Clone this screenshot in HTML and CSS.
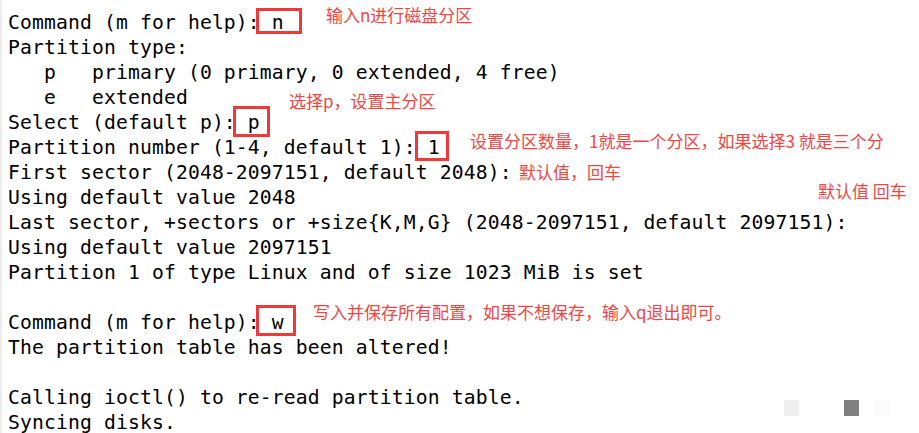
FILE: index.html
```html
<!DOCTYPE html>
<html lang="zh-CN">
<head>
<meta charset="utf-8">
<title>fdisk</title>
<link rel="stylesheet" href="styles.css">
</head>
<body>
<div class="shot">
<pre class="term">Command (m for help): n
Partition type:
   p   primary (0 primary, 0 extended, 4 free)
   e   extended
Select (default p): p
Partition number (1-4, default 1): 1
First sector (2048-2097151, default 2048):
Using default value 2048
Last sector, +sectors or +size{K,M,G} (2048-2097151, default 2097151):
Using default value 2097151
Partition 1 of type Linux and of size 1023 MiB is set

Command (m for help): w
The partition table has been altered!

Calling ioctl() to re-read partition table.
Syncing disks.</pre>

  <span class="box box-n"></span>
  <span class="box box-p"></span>
  <span class="box box-1"></span>
  <span class="box box-w"></span>

  <span class="note note-n">输入n进行磁盘分区</span>
  <span class="note note-p">选择p，设置主分区</span>
  <span class="note note-num">设置分区数量，1就是一个分区，如果选择3 就是三个分</span>
  <span class="note note-first">默认值，回车</span>
  <span class="note note-last">默认值 回车</span>
  <span class="note note-w">写入并保存所有配置，如果不想保存，输入q退出即可。</span>

  <div class="marks">
    <span class="mark mark-light"></span>
    <span class="mark mark-dark"></span>
    <span class="mark mark-faint"></span>
  </div>
</div>
</body>
</html>
```

FILE: styles.css
```css
html, body {
  margin: 0;
  padding: 0;
  background: #ffffff;
}

.shot {
  position: relative;
  width: 919px;
  height: 433px;
  overflow: hidden;
  box-sizing: border-box;
  border-left: 2px solid #ececec;
  padding: 10px 0 0 6px;
}

.term {
  margin: 0;
  font-family: "DejaVu Sans Mono", "Liberation Mono", monospace;
  font-size: 19.7px;
  letter-spacing: 0.14px;
  line-height: 25px;
  color: #000000;
}

.box {
  position: absolute;
  box-sizing: border-box;
  border: 3px solid #ef3a3a;
}

.box-n { left: 254px; top: 8px;   width: 46px; height: 26px; }
.box-p { left: 231px; top: 106px; width: 37px; height: 31px; }
.box-1 { left: 413px; top: 131px; width: 34px; height: 30px; }
.box-w { left: 254px; top: 305px; width: 40px; height: 31px; }

.note {
  position: absolute;
  font-family: "Noto Sans CJK SC", "Noto Sans", sans-serif;
  font-size: 17px;
  line-height: 20px;
  color: #f24545;
  white-space: nowrap;
}

.note-n     { left: 324px; top: 5px; }
.note-p     { left: 287px; top: 91px; }
.note-num   { left: 468px; top: 131px; }
.note-first { left: 517px; top: 162px; }
.note-last  { left: 816px; top: 181px; }
.note-w     { left: 311px; top: 302px; }

.marks {
  position: absolute;
  left: 782px;
  top: 400px;
  display: flex;
}

.mark {
  width: 15px;
  height: 16px;
}

.mark-light { background: #efefef; margin-right: 45px; }
.mark-dark  { background: #808080; margin-right: 15px; }
.mark-faint { background: #fbfbfb; }
```
